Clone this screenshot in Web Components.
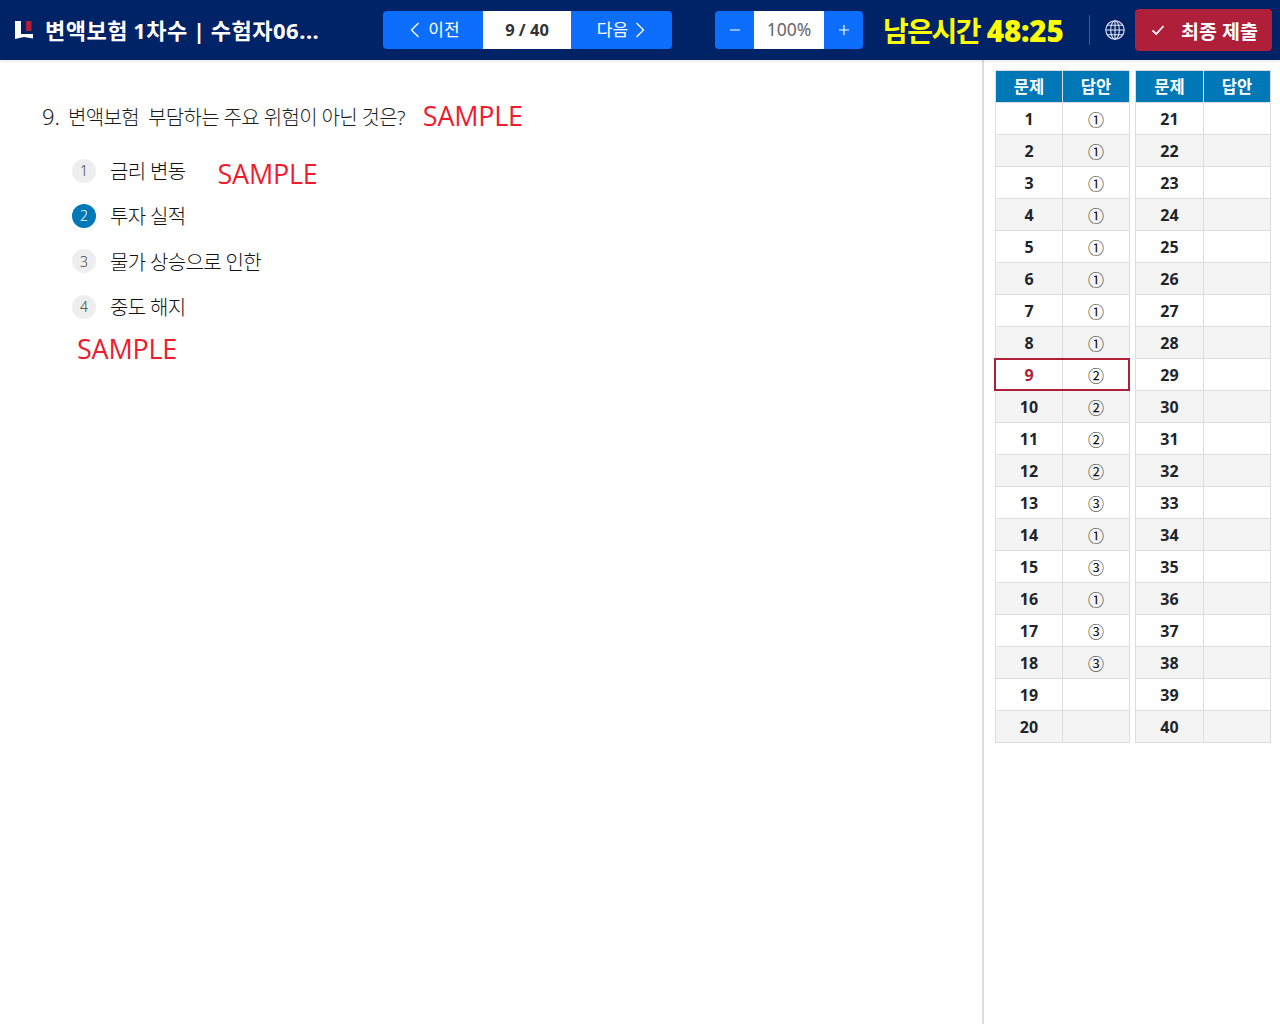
<!DOCTYPE html>
<html lang="ko">
<head>
<meta charset="utf-8">
<title>변액보험 1차수</title>
<style>
    html, body { margin: 0; height: 100%; background: #fff; }
    body { font-family: "Noto Sans", "Noto Sans CJK KR", sans-serif; color: #212529; overflow: hidden; }
    exam-main { height: 964px; }
</style>
</head>
<body>
<exam-header title-text="변액보험 1차수 | 수험자06..." page="9 / 40" zoom="100%" time-label="남은시간" time="48:25"></exam-header>
<exam-main>
    <exam-question number="9." text="변액보험  부담하는 주요 위험이 아닌 것은?">
        <option-item num="1" label="금리 변동"><sample-mark slot="mark" style="margin:6px 0 0 32px"></sample-mark></option-item>
        <option-item num="2" label="투자 실적" selected></option-item>
        <option-item num="3" label="물가 상승으로 인한"></option-item>
        <option-item num="4" label="중도 해지"></option-item>
        <sample-mark style="margin:2px 0 0 5px"></sample-mark>
    </exam-question>
    <answer-sidebar slot="side"></answer-sidebar>
</exam-main>

<script>
class SampleMark extends HTMLElement {
    constructor() {
        super();
        this.attachShadow({ mode: 'open' });
        this.shadowRoot.innerHTML = `<style>
                :host {
                    display: block;
                    width: max-content;
                    color: #ed1c2e;
                    font-family: "Open Sans", sans-serif;
                    font-size: 27px;
                    font-weight: 400;
                    line-height: 36px;
                    letter-spacing: -0.25px;
                    white-space: nowrap;
                }
            </style>SAMPLE`;
    }
}

class ExamHeader extends HTMLElement {
    constructor() {
        super();
        this.attachShadow({ mode: 'open' });
    }

    connectedCallback() {
        this.shadowRoot.innerHTML = `
            <style>
                :host {
                    display: flex;
                    align-items: center;
                    height: 60px;
                    padding-left: 15px;
                    background: #002266;
                    box-shadow: 0 1px 4px rgba(0,0,0,0.12);
                    position: relative;
                    z-index: 1;
                    box-sizing: border-box;
                    font-family: "Noto Sans", "Noto Sans CJK KR", sans-serif;
                }
                .logo { width: 18px; height: 20px; flex: none; margin-right: 12px; }
                .title {
                    width: 338px;
                    flex: none;
                    color: #fff;
                    font-size: 22px;
                    font-weight: 700;
                    white-space: pre;
                    letter-spacing: 0.5px;
                    word-spacing: -1px;
                    margin-top: -2px;
                }
                .group {
                    display: flex;
                    height: 38px;
                    border-radius: 4px;
                    overflow: hidden;
                    background: #0d6efd;
                    color: #fff;
                    font-size: 17px;
                    flex: none;
                }
                .group > div { display: flex; align-items: center; justify-content: center; gap: 8px; box-sizing: border-box; }
                .group svg { display: block; }
                .group span { margin-top: -3px; }
                .prev { width: 100px; padding-left: 4px; }
                .next { width: 101px; gap: 7px; padding-right: 1px; }
                .group > .next { gap: 7px; }
                .page { width: 88px; background: #fff; color: #333; font-weight: 700; font-size: 16.500px; padding-bottom: 2px; }
                .zoom { margin-left: 43px; }
                .step { width: 39px; font-size: 18px; padding-bottom: 1px; }
                .pct { width: 70px; background: #fff; color: #666; font-size: 17.500px; padding-bottom: 2px; }
                .time {
                    width: 206px;
                    margin-left: 20px;
                    flex: none;
                    color: #ffff00;
                    font-size: 28px;
                    font-weight: 700;
                    white-space: pre;
                    letter-spacing: -1.5px;
                }
                .time b { font-size: 29.500px; letter-spacing: -0.2px; margin-left: 1px; }
                .sep { width: 1px; height: 30px; background: #44598c; flex: none; }
                .globe { width: 20px; height: 20px; margin: 0 10px 0 15px; flex: none; }
                .submit {
                    display: flex;
                    align-items: center;
                    width: 137px;
                    height: 42px;
                    flex: none;
                    border-radius: 4px;
                    background: #b01f3a;
                    color: #fff;
                    font-size: 19.500px;
                    font-weight: 700;
                    box-sizing: border-box;
                    padding-left: 16px;
                    white-space: nowrap;
                }
                .submit svg { margin-right: 16px; flex: none; }
            </style>
            <svg class="logo" viewBox="0 0 18 20">
                <path d="M0 1h6v13h12v4.500L9 17 0 19z" fill="#fff"/>
                <path d="M11 1h5.500v10H11z" fill="#b01f3a"/>
            </svg>
            <div class="title">${this.getAttribute('title-text')}</div>
            <div class="group">
                <div class="prev">
                    <svg width="10" height="16" viewBox="0 0 10 16" fill="none" stroke="#fff" stroke-width="1.300"><path d="M8.500 1 1.500 8l7 7"/></svg>
                    <span>이전</span>
                </div>
                <div class="page">${this.getAttribute('page')}</div>
                <div class="next">
                    <span>다음</span>
                    <svg width="10" height="16" viewBox="0 0 10 16" fill="none" stroke="#fff" stroke-width="1.300"><path d="M1.500 1l7 7-7 7"/></svg>
                </div>
            </div>
            <div class="group zoom">
                <div class="step"><svg width="12" height="12" viewBox="0 0 12 12" stroke="#fff" stroke-width="1.200"><path d="M1 6h10"/></svg></div>
                <div class="pct">${this.getAttribute('zoom')}</div>
                <div class="step"><svg width="12" height="12" viewBox="0 0 12 12" stroke="#fff" stroke-width="1.200"><path d="M1 6h10M6 1v10"/></svg></div>
            </div>
            <div class="time">${this.getAttribute('time-label')} <b>${this.getAttribute('time')}</b></div>
            <div class="sep"></div>
            <svg class="globe" viewBox="0 0 20 20" fill="none" stroke="#dfe6f5" stroke-width="1.100">
                <circle cx="10" cy="10" r="9.200"/>
                <ellipse cx="10" cy="10" rx="4.300" ry="9.200"/>
                <path d="M10 .8v18.400M.8 10h18.400M2.200 5.200h15.600M2.200 14.800h15.600"/>
            </svg>
            <div class="submit">
                <svg width="14" height="12" viewBox="0 0 14 12" fill="none" stroke="#fff" stroke-width="1.700"><path d="M1.500 6.500 5.300 10 12.500 2"/></svg>
                <span>최종 제출</span>
            </div>
        `;
    }
}

class ExamMain extends HTMLElement {
    constructor() {
        super();
        this.attachShadow({ mode: 'open' });
        this.shadowRoot.innerHTML = `
            <style>
                :host { display: flex; align-items: stretch; }
                .content { flex: 1; min-width: 0; }
                .side { flex: none; width: 296px; border-left: 2px solid #ddd; }
            </style>
            <div class="content"><slot></slot></div>
            <div class="side"><slot name="side"></slot></div>
        `;
    }
}

class ExamQuestion extends HTMLElement {
    constructor() {
        super();
        this.attachShadow({ mode: 'open' });
    }

    connectedCallback() {
        this.shadowRoot.innerHTML = `
            <style>
                :host { display: block; padding: 38px 0 0 42px; }
                .question {
                    display: flex;
                    align-items: center;
                    height: 36px;
                    font-size: 20px;
                    font-weight: 300;
                    color: #1c1c1c;
                    white-space: pre;
                    letter-spacing: -0.65px;
                }
                .num { margin-right: 8px; font-size: 22px; letter-spacing: 0; }
                sample-mark { margin-left: 18px; }
                .options { margin: 14px 0 0 30px; display: flex; flex-direction: column; }
            </style>
            <div class="question"><span class="num">${this.getAttribute('number')}</span><span>${this.getAttribute('text')}</span><sample-mark></sample-mark></div>
            <div class="options"><slot></slot></div>
        `;
    }
}

class OptionItem extends HTMLElement {
    constructor() {
        super();
        this.attachShadow({ mode: 'open' });
    }

    connectedCallback() {
        const selected = this.hasAttribute('selected');
        this.shadowRoot.innerHTML = `
            <style>
                :host {
                    display: flex;
                    align-items: center;
                    height: 45.330px;
                    font-size: 20px;
                    font-weight: 300;
                    color: #111;
                }
                .circle {
                    width: 24px;
                    height: 24px;
                    border-radius: 50%;
                    flex: none;
                    display: flex;
                    align-items: center;
                    justify-content: center;
                    font-size: 14px;
                    background: ${selected ? '#0077b6' : '#eee'};
                    color: ${selected ? '#fff' : '#444'};
                    margin-right: 14px;
                }
                .label { letter-spacing: -0.65px; white-space: nowrap; }
            </style>
            <span class="circle">${this.getAttribute('num')}</span>
            <span class="label">${this.getAttribute('label')}</span>
            <slot name="mark"></slot>
        `;
    }
}

class AnswerTable extends HTMLElement {
    constructor() {
        super();
        this.attachShadow({ mode: 'open' });
    }

    connectedCallback() {
        const start = Number(this.getAttribute('start'));
        const answers = (this.getAttribute('answers') || '').split(',');
        const current = Number(this.getAttribute('current'));
        const first = this.getAttribute('first-col') + 'px';
        let rows = '';
        for (let i = 0; i < 20; i++) {
            const n = start + i;
            const cls = [i % 2 ? 'even' : '', n === current ? 'current' : ''].join(' ');
            rows += `<div class="row ${cls}"><div class="n">${n}</div><div class="a">${answers[i] || ''}</div></div>`;
        }
        this.shadowRoot.innerHTML = `
            <style>
                :host {
                    display: block;
                    flex: none;
                    width: ${this.getAttribute('table-width')}px;
                    box-sizing: border-box;
                    border-top: 1px solid #ddd;
                    border-left: 1px solid #ddd;
                    font-family: "Noto Sans", "Noto Sans CJK KR", sans-serif;
                }
                .row {
                    display: grid;
                    grid-template-columns: ${first} 1fr;
                    height: 32px;
                    box-sizing: border-box;
                    border-bottom: 1px solid #ddd;
                    position: relative;
                }
                .row > div {
                    display: flex;
                    align-items: center;
                    justify-content: center;
                    border-right: 1px solid #ddd;
                }
                .head { background: #0077b6; height: 32px; }
                .head > div { color: #fff; font-size: 16.500px; font-weight: 700; padding-bottom: 2px; }
                .even { background: #f4f4f4; }
                .n { font-size: 16px; font-weight: 700; color: #212529; }
                .a { font-size: 16px; color: #111; font-family: "Noto Sans CJK KR", sans-serif; }
                .current .n { color: #b01f3a; }
                .current::after {
                    content: "";
                    position: absolute;
                    inset: -1px 0 -1px -2px;
                    border: 2px solid #b01f3a;
                    pointer-events: none;
                }
            </style>
            <div class="row head"><div>문제</div><div>답안</div></div>
            ${rows}
        `;
    }
}

class AnswerSidebar extends HTMLElement {
    constructor() {
        super();
        this.attachShadow({ mode: 'open' });
        this.shadowRoot.innerHTML = `
            <style>
                :host { display: flex; gap: 5px; padding: 10px 0 0 11px; }
            </style>
            <answer-table start="1" first-col="67" table-width="135" current="9" answers="①,①,①,①,①,①,①,①,②,②,②,②,③,①,③,①,③,③"></answer-table>
            <answer-table start="21" first-col="68" table-width="136"></answer-table>
        `;
    }
}

customElements.define('sample-mark', SampleMark);
customElements.define('exam-header', ExamHeader);
customElements.define('exam-main', ExamMain);
customElements.define('exam-question', ExamQuestion);
customElements.define('option-item', OptionItem);
customElements.define('answer-table', AnswerTable);
customElements.define('answer-sidebar', AnswerSidebar);
</script>
</body>
</html>
